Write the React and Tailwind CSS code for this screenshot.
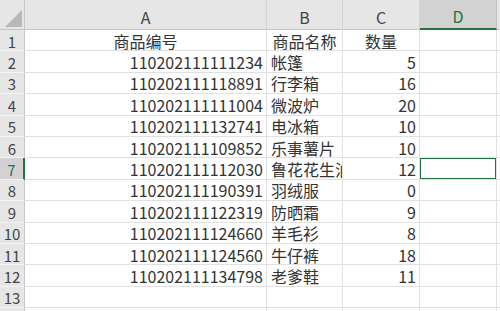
import React from "react";

const rows = [
  ["商品编号", "商品名称", "数量", true],
  ["110202111111234", "帐篷", "5"],
  ["110202111118891", "行李箱", "16"],
  ["110202111111004", "微波炉", "20"],
  ["110202111132741", "电冰箱", "10"],
  ["110202111109852", "乐事薯片", "10"],
  ["110202111112030", "鲁花花生油", "12"],
  ["110202111190391", "羽绒服", "0"],
  ["110202111122319", "防晒霜", "9"],
  ["110202111124660", "羊毛衫", "8"],
  ["110202111124560", "牛仔裤", "18"],
  ["110202111134798", "老爹鞋", "11"],
  ["", "", ""],
  ["", "", ""],
];

const font = { fontFamily: '"Noto Sans CJK SC", "Noto Sans", sans-serif' };

function Cell({ children, align = "left", selected }) {
  const a =
    align === "right" ? "justify-end pr-[3px]" : align === "center" ? "justify-center" : "justify-start pl-[4px]";
  return (
    <div
      className={`relative flex items-center pt-[2px] ${a} border-r border-b border-[#e1e1e1] overflow-hidden whitespace-nowrap text-[16px] leading-[19px] text-[#333]`}
    >
      {children}
      {selected && (
        <div className="absolute -left-px -top-px -right-px -bottom-px border-2 border-[#217346]" />
      )}
    </div>
  );
}

export default function App() {
  return (
    <div className="w-[500px] h-[311px] overflow-hidden bg-white" style={font}>
      <div className="grid grid-cols-[25px_242px_76px_77px_77px_1fr] grid-rows-[30px_repeat(14,21.4px)]">
        {/* corner */}
        <div className="relative bg-[#e6e6e6] border-r border-b border-[#c6c6c6]">
          <svg className="absolute right-[2px] bottom-[2px]" width="17" height="17" viewBox="0 0 16 16">
            <polygon points="16,0 16,16 0,16" fill="#b8b8b8" />
          </svg>
        </div>
        {["A", "B", "C"].map((l) => (
          <div
            key={l}
            className="flex items-end justify-center pb-[1px] bg-[#e6e6e6] border-r border-b border-[#c6c6c6] border-r-[#d4d4d4] text-[16px] leading-[22px] text-[#444]"
          >
            {l}
          </div>
        ))}
        <div className="flex items-end justify-center pb-[1px] bg-[#d2d2d2] border-r border-[#c0c0c0] border-b-2 border-b-[#217346] text-[16px] leading-[22px] text-[#217346]">
          D
        </div>
        <div className="bg-[#e6e6e6] border-b border-[#c6c6c6]" />

        {rows.map((r, i) => {
          const n = i + 1;
          const sel = n === 7;
          return (
            <React.Fragment key={n}>
              <div
                className={`flex items-center pt-[2px] justify-center text-[15px] leading-[19px] border-b border-[#f4f4f4] ${
                  sel
                    ? "bg-[#d2d2d2] text-[#217346] border-r-2 border-r-[#217346]"
                    : "bg-[#e6e6e6] text-[#444] border-r border-r-[#c6c6c6]"
                }`}
              >
                {n}
              </div>
              <Cell align={r[3] ? "center" : "right"}>{r[0]}</Cell>
              <Cell align={r[3] ? "center" : "left"}>{r[1]}</Cell>
              <Cell align={r[3] ? "center" : "right"}>{r[2]}</Cell>
              <Cell selected={sel}>
                {sel && <div className="absolute right-[-3px] bottom-[-3px] w-[5px] h-[5px] bg-[#217346] border border-white" />}
              </Cell>
              <div className="border-b border-[#e1e1e1]" />
            </React.Fragment>
          );
        })}
      </div>
    </div>
  );
}
